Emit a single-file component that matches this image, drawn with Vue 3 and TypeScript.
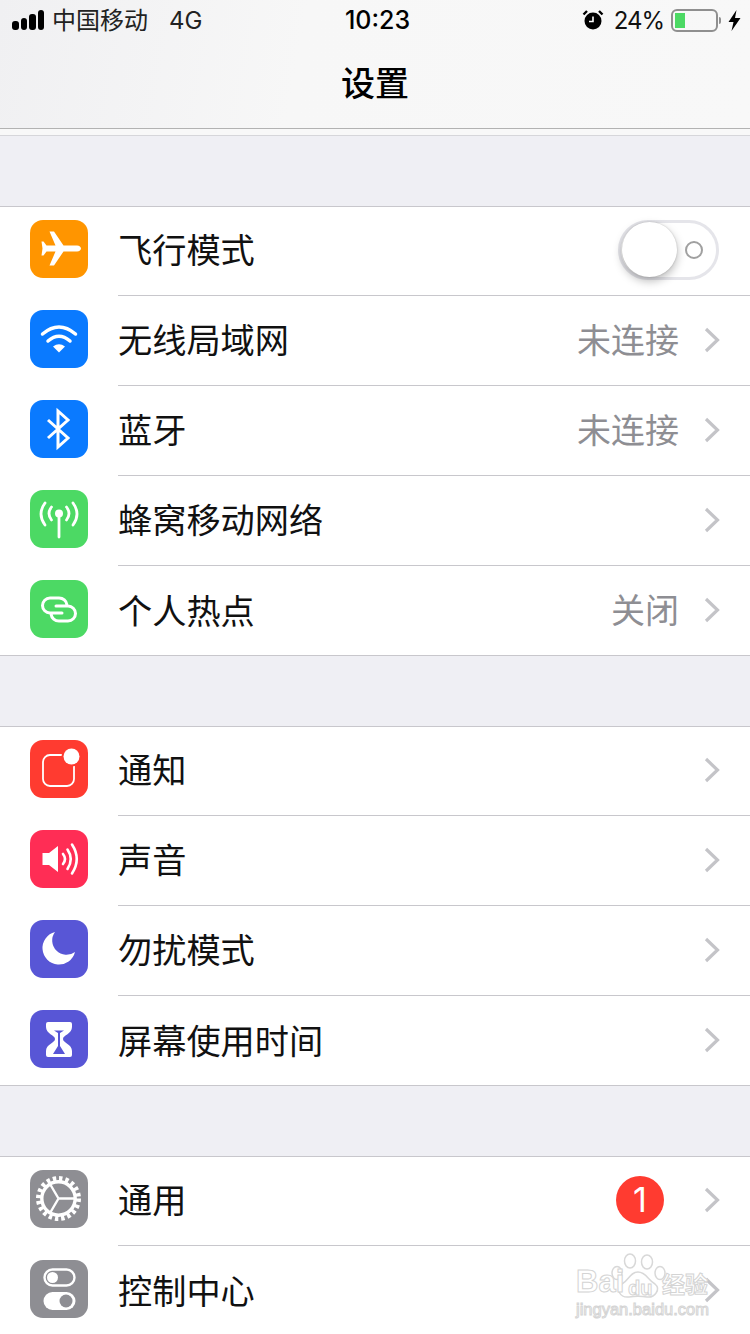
<script setup lang="ts">
interface Row {
  label: string;
  icon: string;
  color: string;
  value?: string;
  toggle?: boolean;
  badge?: string;
}

const groups: Row[][] = [
  [
    { label: '飞行模式', icon: 'plane', color: '#ff9500', toggle: true },
    { label: '无线局域网', icon: 'wifi', color: '#0a7aff', value: '未连接' },
    { label: '蓝牙', icon: 'bluetooth', color: '#0a7aff', value: '未连接' },
    { label: '蜂窝移动网络', icon: 'cell', color: '#4cd964' },
    { label: '个人热点', icon: 'hotspot', color: '#4cd964', value: '关闭' },
  ],
  [
    { label: '通知', icon: 'notify', color: '#ff3b30' },
    { label: '声音', icon: 'sound', color: '#ff2d55' },
    { label: '勿扰模式', icon: 'moon', color: '#5856d6' },
    { label: '屏幕使用时间', icon: 'hourglass', color: '#5856d6' },
  ],
  [
    { label: '通用', icon: 'gear', color: '#8e8e93', badge: '1' },
    { label: '控制中心', icon: 'switches', color: '#8e8e93' },
  ],
];
</script>

<template>
  <div class="screen">
    <header class="nav">
      <div class="status">
        <div class="status-left">
          <span class="bars"><i class="b1" /><i class="b2" /><i class="b3" /><i class="b4" /></span>
          <span class="carrier">中国移动</span>
          <span class="net">4G</span>
        </div>
        <div class="time">10:23</div>
        <div class="status-right">
          <svg class="alarm" width="22" height="22" viewBox="0 0 22 22">
            <circle cx="11" cy="12" r="8.5" fill="#000" />
            <path d="M1.5 5.5 L5 2 M20.5 5.5 L17 2" stroke="#000" stroke-width="2.4" />
            <path d="M11 7.5 V12.5 H7" stroke="#fff" stroke-width="1.6" fill="none" />
          </svg>
          <span class="pct">24%</span>
          <span class="battery"><i /></span>
          <span class="nub" />
          <svg class="bolt" width="13" height="21" viewBox="0 0 13 21">
            <path d="M8.5 0 L0.5 12 H5.5 L3.5 21 L12.5 8 H7 Z" fill="#000" />
          </svg>
        </div>
      </div>
      <h1 class="title">设置</h1>
    </header>
    <div class="strip" />

    <section v-for="(group, g) in groups" :key="g" class="group">
      <div v-for="row in group" :key="row.label" class="row">
        <div class="icon" :style="{ background: row.color }">
          <svg width="58" height="58" viewBox="0 0 58 58">
            <path
              v-if="row.icon === 'plane'"
              d="M47 25.5C49.5 25.5 51 27 51 28.5C51 30 49.5 31.5 47 31.5L33.5 31.5L24 45.5L19.5 45.5L25.5 31.5L16.5 31.5L13.5 35.5L11.5 35.5L12.5 28.5L11.5 21.5L13.5 21.5L16.5 25.5L25.5 25.5L19.5 11.5L24 11.5L33.5 25.5Z"
              fill="#fff"
            />
            <g v-else-if="row.icon === 'wifi'">
              <path d="M12.5 24Q29 10 45.5 24M18 31Q29 21.5 40 31" stroke="#fff" stroke-width="3.5" stroke-linecap="round" fill="none" />
              <path d="M23 36.5Q29 32 35 36.5L29 42.5Z" fill="#fff" />
            </g>
            <path
              v-else-if="row.icon === 'bluetooth'"
              d="M18 20L38 38L28 47V11L38 20L18 38"
              stroke="#fff"
              stroke-width="3"
              fill="none"
            />
            <g v-else-if="row.icon === 'cell'">
              <path
                d="M15 13Q7 24 15 35M21.5 17Q16.5 23.5 21.5 30M43 13Q51 24 43 35M36.5 17Q41.5 23.5 36.5 30M29 24V47"
                stroke="#fff"
                stroke-width="2.8"
                stroke-linecap="round"
                fill="none"
              />
              <circle cx="29" cy="23.5" r="4" fill="#fff" />
            </g>
            <path
              v-else-if="row.icon === 'hotspot'"
              d="M32 33H20A7.5 7.5 0 0 1 20 18H29A8 8 0 0 1 37 25M26 26H38A7.5 7.5 0 0 1 38 41H29A8 8 0 0 1 21 34"
              stroke="#fff"
              stroke-width="3"
              stroke-linecap="round"
              fill="none"
            />
            <g v-else-if="row.icon === 'notify'">
              <rect x="13" y="15" width="31" height="31" rx="7" stroke="#fff" stroke-width="1.8" fill="none" />
              <circle cx="41.5" cy="16.5" r="10" fill="#ff3b30" />
              <circle cx="41.5" cy="16.5" r="8" fill="#fff" />
            </g>
            <g v-else-if="row.icon === 'sound'">
              <path d="M12.5 23H19L28 16V42L19 35H12.5Z" fill="#fff" />
              <path
                d="M33 24Q37 29 33 34M37.5 19.5Q44 29 37.5 39M42 14.5Q51.5 29 42 43.5"
                stroke="#fff"
                stroke-width="2.6"
                stroke-linecap="round"
                fill="none"
              />
            </g>
            <path v-else-if="row.icon === 'moon'" d="M25 12A16.5 16.5 0 1 0 45 32A14.3 14.3 0 0 1 25 12Z" fill="#fff" />
            <g v-else-if="row.icon === 'hourglass'">
              <path
                d="M18 12H40Q42 12 42 14V17C42 24 33 25 33 29C33 33 42 34 42 41V45Q42 47 40 47H18Q16 47 16 45V41C16 34 25 33 25 29C25 25 16 24 16 17V14Q16 12 18 12Z"
                fill="#fff"
              />
              <path d="M24 20.5H34L30 23V36L35 44H23L28 36V23Z" fill="#5856d6" />
            </g>
            <g v-else-if="row.icon === 'gear'">
              <circle cx="28.5" cy="28.5" r="20" stroke="#fff" stroke-width="5" stroke-dasharray="3.4 2.88" fill="none" />
              <circle cx="28.5" cy="28.5" r="16.7" stroke="#fff" stroke-width="3.4" fill="none" />
              <path d="M28.5 28.5H45M28.5 28.5L20 14M28.5 28.5L20 43" stroke="#fff" stroke-width="2.4" fill="none" />
            </g>
            <g v-else-if="row.icon === 'switches'">
              <rect x="14.5" y="9.5" width="30" height="16" rx="8" stroke="#fff" stroke-width="2.4" fill="none" />
              <circle cx="22.5" cy="17.5" r="5.5" fill="#fff" />
              <rect x="13.5" y="32" width="32" height="18" rx="9" fill="#fff" />
              <circle cx="36" cy="41" r="6.5" fill="#8e8e93" />
            </g>
          </svg>
        </div>
        <div class="body">
          <span class="label">{{ row.label }}</span>
          <span v-if="row.value" class="value">{{ row.value }}</span>
          <span v-if="row.badge" class="badge">{{ row.badge }}</span>
          <span v-if="row.toggle" class="toggle"><i class="knob" /><i class="off" /></span>
          <svg v-else class="chev" width="16" height="26" viewBox="0 0 16 26">
            <path d="M2 2L13.5 13L2 24" stroke="#c4c4c8" stroke-width="3.2" fill="none" />
          </svg>
        </div>
      </div>
    </section>

    <div class="mark">
      <svg class="paw" width="70" height="48" viewBox="0 0 70 48">
        <g fill="#fff" stroke="#d8d8d8" stroke-width="1.5">
          <ellipse cx="11" cy="20" rx="5" ry="6.5" />
          <ellipse cx="24" cy="8" rx="5.5" ry="7" />
          <ellipse cx="41" cy="9" rx="5.5" ry="7" />
          <ellipse cx="54" cy="20" rx="5" ry="6.5" />
          <path d="M32 19C40 19 42 27 49 31C55 36 49 45 41 44C35 43 29 43 23 44C14 45 9 36 16 31C23 27 24 19 32 19Z" />
        </g>
      </svg>
      <span class="mark-bai">Bai</span>
      <span class="mark-du">du</span>
      <span class="mark-jy">经验</span>
      <span class="mark-url">jingyan.baidu.com</span>
    </div>
  </div>
</template>

<style scoped>
.screen {
  position: relative;
  width: 750px;
  height: 1334px;
  overflow: hidden;
  background: #efeff4;
  font-family: "Noto Sans CJK SC", "Liberation Sans", sans-serif;
  color: #000;
}

.nav {
  height: 129px;
  box-sizing: border-box;
  border-bottom: 1px solid #b2b2b2;
  background: linear-gradient(100deg, #f0f0f2 0%, #f7f7f7 40%, #f8f8f8 100%);
}

.status {
  height: 40px;
  display: grid;
  grid-template-columns: 1fr auto 1fr;
  align-items: center;
  padding: 0 9px 0 12px;
  font-family: Inter, "Noto Sans CJK SC", sans-serif;
  font-size: 24px;
}

.status-left,
.status-right {
  display: flex;
  align-items: center;
}

.status-right {
  justify-content: flex-end;
}

.bars {
  display: flex;
  align-items: flex-end;
  gap: 2px;
  height: 20px;
  margin-right: 8px;
}

.bars i {
  display: block;
  width: 6.5px;
  background: #000;
  border-radius: 3px;
}

.b1 { height: 9px; }
.b2 { height: 12px; }
.b3 { height: 16px; }
.b4 { height: 20px; }

.carrier {
  font-family: "Noto Sans CJK SC", sans-serif;
  font-size: 24px;
  color: #222;
  margin-bottom: 4px;
}

.net {
  margin-left: 21px;
  color: #222;
}

.time {
  font-weight: 500;
  font-size: 25px;
  margin-left: 2px;
}

.alarm {
  margin-right: 10px;
}

.pct {
  margin-right: 7px;
  letter-spacing: -1px;
  color: #111;
}

.battery {
  display: block;
  width: 47px;
  height: 23px;
  box-sizing: border-box;
  border: 2px solid #8f8f8f;
  border-radius: 6px;
  padding: 2px;
}

.battery i {
  display: block;
  width: 10px;
  height: 15px;
  background: #4cd964;
}

.nub {
  width: 2px;
  height: 7px;
  margin: 0 7px 0 1px;
  background: #8f8f8f;
  border-radius: 0 2px 2px 0;
}

.title {
  margin: 0;
  height: 88px;
  line-height: 84px;
  text-align: center;
  font-size: 34px;
  font-weight: 500;
}

.strip {
  height: 6px;
  background: #f8f8f8;
  border-bottom: 1px solid #d6d6da;
  margin-bottom: 70px;
}

.group {
  background: #fff;
  box-shadow: inset 0 1px #c8c7cc, inset 0 -1px #c8c7cc;
  margin-bottom: 70px;
}

.row {
  height: 90px;
  display: flex;
}

.icon {
  flex: none;
  width: 58px;
  height: 58px;
  margin: 14px 30px 0;
  border-radius: 13px;
}

.icon svg {
  display: block;
}

.body {
  flex: 1;
  min-width: 0;
  display: flex;
  align-items: center;
  padding: 0 30px 2px 0;
  border-bottom: 1px solid #c8c7cc;
  box-sizing: border-box;
}

.row:last-child .body {
  border-bottom: none;
}

.label {
  flex: 1;
  font-size: 34.2px;
  color: #111;
  margin-bottom: 3px;
}

.value {
  font-size: 34px;
  color: #8e8e93;
  margin: 0 25px 3px 0;
}

.badge {
  width: 48px;
  height: 48px;
  margin-right: 40px;
  border-radius: 50%;
  background: #ff3b30;
  color: #fff;
  font-family: Inter, sans-serif;
  font-size: 34px;
  line-height: 48px;
  text-align: center;
}

.chev {
  display: block;
}

.toggle {
  position: relative;
  display: block;
  width: 101px;
  height: 60px;
  margin-right: 1px;
  box-sizing: border-box;
  border: 3px solid #e5e5ea;
  border-radius: 30px;
  background: #fff;
}

.knob {
  position: absolute;
  left: 1px;
  top: -1px;
  width: 55px;
  height: 55px;
  border-radius: 50%;
  background: #fff;
  box-shadow: 0 4px 10px rgba(0, 0, 0, 0.28), 0 0 2px rgba(0, 0, 0, 0.2);
}

.off {
  position: absolute;
  left: 64px;
  top: 18px;
  width: 18px;
  height: 18px;
  box-sizing: border-box;
  border: 2px solid #a0a0a0;
  border-radius: 50%;
}

/* baidu watermark sits over the last row */
.mark {
  position: absolute;
  left: 574px;
  top: 1250px;
  width: 140px;
  height: 72px;
  color: #fff;
  -webkit-text-stroke: 1px #d4d4d4;
  pointer-events: none;
}

.paw {
  position: absolute;
  left: 32px;
  top: 3px;
}

.mark-bai {
  position: absolute;
  left: 2px;
  top: 14px;
  font: bold 31px/36px "Liberation Sans", sans-serif;
}

.mark-du {
  position: absolute;
  left: 54px;
  top: 26px;
  font: bold 20px/24px "Liberation Sans", sans-serif;
}

.mark-jy {
  position: absolute;
  left: 88px;
  top: 17px;
  font: bold 23px/32px "Noto Sans CJK SC", sans-serif;
}

.mark-url {
  position: absolute;
  left: 2px;
  top: 48px;
  font: 16.5px/22px "Liberation Sans", sans-serif;
}
</style>

<style>
html,
body {
  margin: 0;
  background: #efeff4;
}
</style>
